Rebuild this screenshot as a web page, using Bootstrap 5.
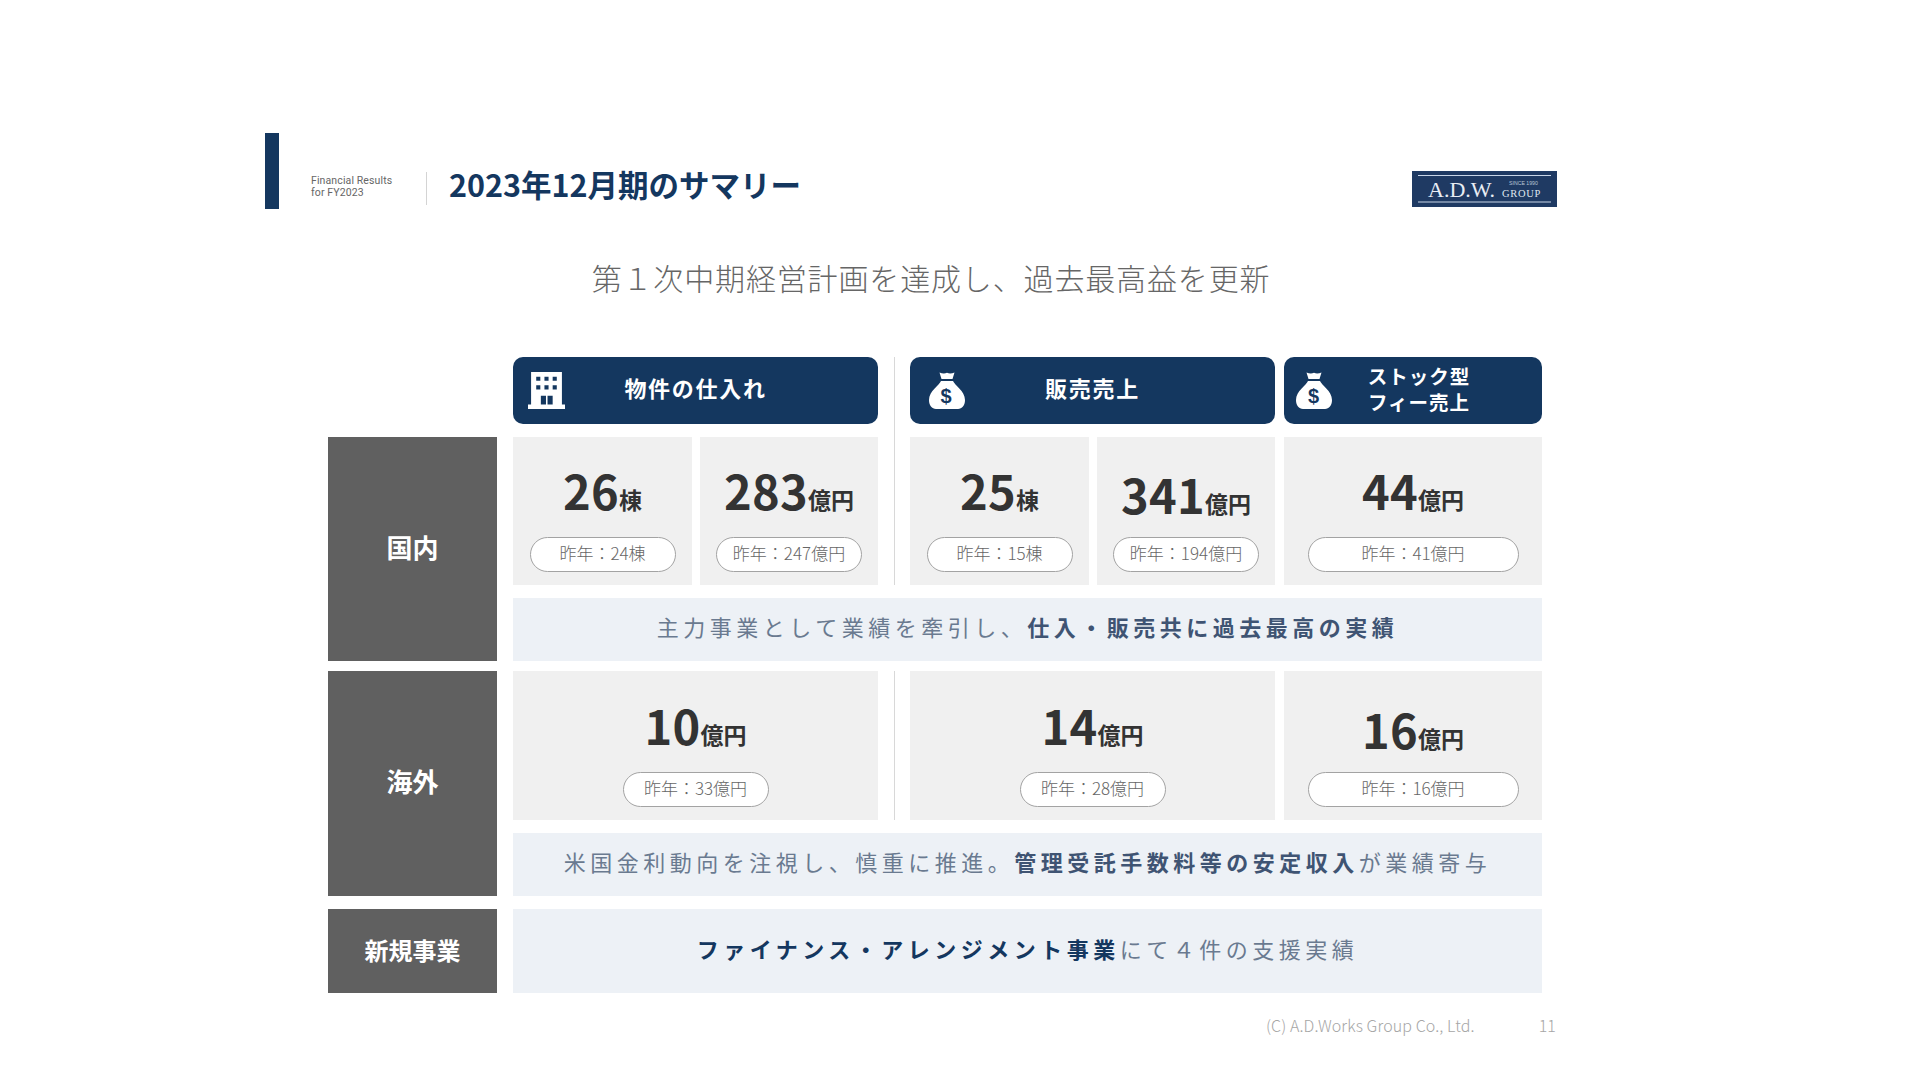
<!doctype html>
<html lang="ja"><head><meta charset="utf-8">
<link href="https://cdn.jsdelivr.net/npm/bootstrap@5.3.0/dist/css/bootstrap.min.css" rel="stylesheet">
<style>
body{background:#fff;font-family:"Noto Sans CJK JP","Noto Sans",sans-serif;color:#333;margin:0}
.slide-page{width:1908px;height:1073px;padding-top:133px;overflow:hidden}
.title-band{height:76px;padding:0 351px 0 265px}
.accent-bar{width:14px;height:76px;background:#14375f}
.fy-label{margin-left:32px;margin-top:42px;width:115px;height:26px;font:400 10.5px/12.3px "Roboto",sans-serif;letter-spacing:.12px;color:#666}
.title-rule{width:1px;height:33px;margin-top:39px;background:#d4d4d4}
.slide-title{margin:0 0 0 22px;padding-top:28px;font-size:30.5px;font-weight:700;line-height:46px;color:#14375f;flex:1}
.logo-box{width:145px;height:36px;margin-top:38px;display:block}
.sub-head{text-align:center;font-size:30px;font-weight:300;letter-spacing:.85px;color:#666;line-height:44px;margin:46px 46px 58px 0;height:44px}
.sheet{margin-left:328px;display:grid;grid-template-columns:169px 16px 179px 8px 178px 32px 179px 8px 178px 9px 258px;grid-template-rows:67px 13px 148px 13px 63px 10px 149px 13px 63px 13px 84px}
.c-lab{grid-column:1}.c-a1{grid-column:3}.c-a2{grid-column:5}.c-a{grid-column:3/6}.c-div{grid-column:6}.c-b1{grid-column:7}.c-b2{grid-column:9}.c-b{grid-column:7/10}.c-c{grid-column:11}.c-all{grid-column:3/12}
.r-1{grid-row:1}.r-3{grid-row:3}.r-5{grid-row:5}.r-7{grid-row:7}.r-9{grid-row:9}.r-11{grid-row:11}.r-1to3{grid-row:1/4}.r-3to5{grid-row:3/6}.r-7to9{grid-row:7/10}
.side-label{background:#606060;color:#fff;font-weight:700;font-size:26px;line-height:1;padding-bottom:5px}
.side-label.small-lab{font-size:24px;padding-bottom:3px}
.col-head{background:#14375f;color:#fff;border-radius:10px;display:grid;grid-template-columns:1fr auto 1fr;align-items:center;font-size:22px;font-weight:700;letter-spacing:1.7px;line-height:25.500px;text-align:center;padding:0 15px}
.col-head svg{display:block}
.col-head span{padding-bottom:6px}
.col-head.pad-b{padding:0 19px}
.col-head.pad-c{padding:0 12px;font-size:19.500px;letter-spacing:1px}
.col-head.pad-c span{padding-bottom:4px}
.nudge-r{margin-left:12px}
.v-rule{justify-self:center;width:1px;background:#d8d8d8}
.stat-cell{background:#f0f0f0;padding-bottom:13px}
.stat-num{font-size:47px;font-weight:700;line-height:56px;color:#333;margin-bottom:9px;letter-spacing:.3px}
.stat-num span{font-size:23px;font-weight:700;letter-spacing:0;margin-left:0;position:relative;top:-1px}
.stat-num.low{transform:translateY(4px)}
.prev-pill{width:146px;height:35px;background:#fff;border:1px solid #a3a3a3;border-radius:18px;font-size:17px;font-weight:300;color:#666;line-height:1;padding-bottom:5px}
.prev-pill.wide{width:211px}
.note-strip{background:#edf1f6;font-size:22px;line-height:1;color:#6a7a90;white-space:nowrap;letter-spacing:4.5px;padding-bottom:7px}
.note-strip b{font-weight:700;color:#3f5473}
.note-strip b.deep{color:#14375f}
.foot-line{margin-top:22px;padding-right:352px;font-size:16px;letter-spacing:.1px;line-height:20px;color:#a6a6a6;font-weight:300}
.foot-line .pg{margin-left:64px}
</style></head><body>
<div class="slide-page">
 <div class="title-band d-flex align-items-start">
  <div class="accent-bar"></div>
  <div class="fy-label">Financial Results<br>for FY2023</div>
  <div class="title-rule"></div>
  <h1 class="slide-title">2023年12月期のサマリー</h1>
  <svg class="logo-box" viewBox="0 0 145 36"><rect width="145" height="36" fill="#1f3a63"/><rect x="6" y="4" width="133" height="1" fill="#c9d6e8"/><rect x="6" y="30.500" width="133" height="1" fill="#c9d6e8"/><text x="16" y="25.500" font-family="Liberation Serif" font-size="22" fill="#e8edf4">A.D.W.</text><text x="97" y="14" font-family="Liberation Sans" font-size="5.200" fill="#b9c5d6">SINCE 1990</text><text x="90" y="26" font-family="Liberation Serif" font-size="10.500" letter-spacing=".7" fill="#dfe6ef">GROUP</text></svg>
 </div>
 <div class="sub-head">第１次中期経営計画を達成し、過去最高益を更新</div>
 <div class="sheet">
  <div class="col-head c-a r-1"><svg width="37" height="37" viewBox="0 0 36 36"><path fill="#fff" fill-rule="evenodd" d="M3 0h30v31.500h3V36H0v-4.500h3zM8 4.500v4h4v-4zm8 0v4h4v-4zm8 0v4h4v-4zM8 13v4h4v-4zm8 0v4h4v-4zm8 0v4h4v-4zM12.500 23v8.500h5V23zm6.500 0v8.500h5V23z"/></svg><span>物件の仕入れ</span><i></i></div>
  <div class="v-rule c-div r-1to3"></div>
  <div class="col-head pad-b c-b r-1"><svg width="36" height="37" viewBox="0 0 36 37"><path fill="#fff" d="M10.500 .5c2.500 1 5 1.500 7.500 .3 2.500 1.200 5 .7 7.500-.3L23.500 7h-11zM12 9h12c1.500 4 12 10 12 19 0 5.500-3 9-7 9H7c-4 0-7-3.500-7-9 0-9 10.500-15 12-19z"/><text x="18" y="31" text-anchor="middle" font-family="Liberation Sans" font-weight="700" font-size="20" fill="#14375f">$</text></svg><span>販売売上</span><i></i></div>
  <div class="col-head pad-c c-c r-1"><svg width="36" height="37" viewBox="0 0 36 37"><path fill="#fff" d="M10.500 .5c2.500 1 5 1.500 7.500 .3 2.500 1.200 5 .7 7.500-.3L23.500 7h-11zM12 9h12c1.500 4 12 10 12 19 0 5.500-3 9-7 9H7c-4 0-7-3.500-7-9 0-9 10.500-15 12-19z"/><text x="18" y="31" text-anchor="middle" font-family="Liberation Sans" font-weight="700" font-size="20" fill="#14375f">$</text></svg><span class="nudge-r">ストック型<br>フィー売上</span><i></i></div>

  <div class="side-label c-lab r-3to5 d-flex align-items-center justify-content-center">国内</div>
  <div class="stat-cell c-a1 r-3 d-flex flex-column align-items-center justify-content-end"><div class="stat-num">26<span>棟</span></div><div class="prev-pill d-flex align-items-center justify-content-center">昨年：24棟</div></div>
  <div class="stat-cell c-a2 r-3 d-flex flex-column align-items-center justify-content-end"><div class="stat-num">283<span>億円</span></div><div class="prev-pill d-flex align-items-center justify-content-center">昨年：247億円</div></div>
  <div class="stat-cell c-b1 r-3 d-flex flex-column align-items-center justify-content-end"><div class="stat-num">25<span>棟</span></div><div class="prev-pill d-flex align-items-center justify-content-center">昨年：15棟</div></div>
  <div class="stat-cell c-b2 r-3 d-flex flex-column align-items-center justify-content-end"><div class="stat-num low">341<span>億円</span></div><div class="prev-pill d-flex align-items-center justify-content-center">昨年：194億円</div></div>
  <div class="stat-cell c-c r-3 d-flex flex-column align-items-center justify-content-end"><div class="stat-num">44<span>億円</span></div><div class="prev-pill wide d-flex align-items-center justify-content-center">昨年：41億円</div></div>
  <div class="note-strip c-all r-5 d-flex align-items-center justify-content-center"><span>主力事業として業績を牽引し、<b>仕入・販売共に過去最高の実績</b></span></div>

  <div class="side-label c-lab r-7to9 d-flex align-items-center justify-content-center">海外</div>
  <div class="stat-cell c-a r-7 d-flex flex-column align-items-center justify-content-end"><div class="stat-num">10<span>億円</span></div><div class="prev-pill d-flex align-items-center justify-content-center">昨年：33億円</div></div>
  <div class="v-rule c-div r-7"></div>
  <div class="stat-cell c-b r-7 d-flex flex-column align-items-center justify-content-end"><div class="stat-num">14<span>億円</span></div><div class="prev-pill d-flex align-items-center justify-content-center">昨年：28億円</div></div>
  <div class="stat-cell c-c r-7 d-flex flex-column align-items-center justify-content-end"><div class="stat-num low">16<span>億円</span></div><div class="prev-pill wide d-flex align-items-center justify-content-center">昨年：16億円</div></div>
  <div class="note-strip c-all r-9 d-flex align-items-center justify-content-center"><span>米国金利動向を注視し、慎重に推進。<b>管理受託手数料等の安定収入</b>が業績寄与</span></div>

  <div class="side-label small-lab c-lab r-11 d-flex align-items-center justify-content-center">新規事業</div>
  <div class="note-strip c-all r-11 d-flex align-items-center justify-content-center"><span><b class="deep">ファイナンス・アレンジメント事業</b>にて４件の支援実績</span></div>
 </div>
 <div class="foot-line d-flex justify-content-end"><span>(C) A.D.Works Group Co., Ltd.</span><span class="pg">11</span></div>
</div>
<script src="https://cdn.jsdelivr.net/npm/bootstrap@5.3.0/dist/js/bootstrap.bundle.min.js"></script>
</body></html>
